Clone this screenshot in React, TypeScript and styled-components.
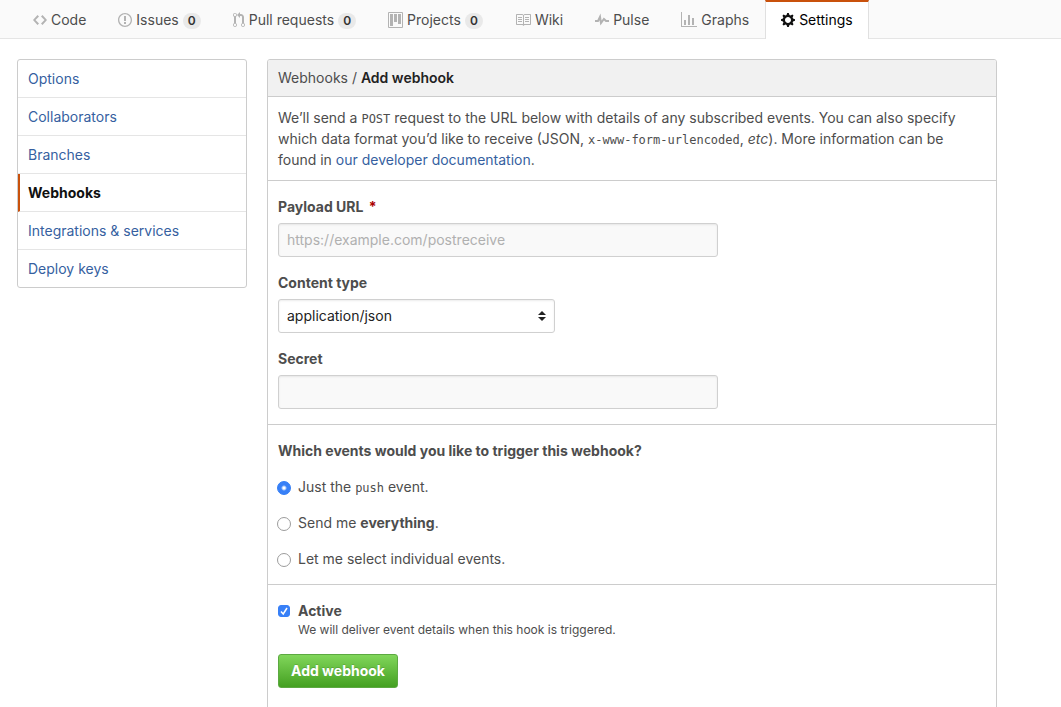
import React from "react";
import styled, { createGlobalStyle, css } from "styled-components";

const GlobalStyle = createGlobalStyle`
  *, *::before, *::after { box-sizing: border-box; }
  body {
    margin: 0;
    background: #fff;
    color: #4d4d4d;
    font: 14px/21px Inter, "Liberation Sans", sans-serif;
  }
  a { color: #365f9f; text-decoration: none; }
  a:hover { text-decoration: underline; }
`;

const TabBar = styled.nav`
  display: flex;
  height: 39px;
  padding-left: 17px;
  background: #fafafa;
  border-bottom: 1px solid #e5e5e5;
`;

const Tab = styled.a<{ $active?: boolean }>`
  display: flex;
  align-items: center;
  gap: 4px;
  height: 39px;
  padding: 0 15px 2px;
  border: solid transparent;
  border-width: 3px 1px 0;
  color: #4d4d4d;
  white-space: nowrap;
  svg { fill: #b3b3b3; flex: none; }
  ${(p) =>
    p.$active &&
    css`
      color: #000;
      background: #fff;
      border-color: #c9510c #e0e0e0 transparent;
      border-top-width: 2px;
      padding-bottom: 1px;
      svg { fill: #111; }
    `}
`;

const TabName = styled.span`
  margin-bottom: 2px;
`;

const Counter = styled.span`
  min-width: 18px;
  margin-top: 2px;
  padding: 0 5px;
  border-radius: 8px;
  background: #e9e9e9;
  color: #333;
  font-size: 12px;
  font-weight: 600;
  line-height: 16px;
  text-align: center;
`;

const Layout = styled.div`
  display: grid;
  grid-template-columns: 230px minmax(0, 1fr);
  align-items: start;
  gap: 20px;
  padding: 20px 64px 0 17px;
`;

const Menu = styled.nav`
  display: flex;
  flex-direction: column;
  border: 1px solid #ccc;
  border-radius: 3px;
`;

const MenuItem = styled.a<{ $active?: boolean }>`
  padding: 8px 10px;
  border-bottom: 1px solid #e5e5e5;
  &:last-child { border-bottom: 0; }
  ${(p) =>
    p.$active &&
    css`
      color: #111;
      font-weight: 700;
      padding-left: 8px;
      border-left: 2px solid #c9510c;
    `}
`;

const Panel = styled.main`
  border: 1px solid #ccc;
  border-radius: 3px;
`;

const PanelHeader = styled.h1`
  margin: 0;
  padding: 7px 10px 8px;
  background: #f1f1f1;
  border-bottom: 1px solid #ccc;
  border-radius: 2px 2px 0 0;
  font-size: 14px;
  font-weight: 400;
  strong { color: #222; font-weight: 600; }
`;

const Intro = styled.p`
  margin: 0;
  padding: 10px 20px 10px 10px;
  border-bottom: 1px solid #ccc;
`;

const Code = styled.code`
  font: 12px "DejaVu Sans Mono", monospace;
`;

const Section = styled.section`
  display: flex;
  flex-direction: column;
  align-items: flex-start;
  gap: 15px;
  padding: 15px 10px;
  border-bottom: 1px solid #ccc;
  &:last-child { border-bottom: 0; padding-bottom: 30px; }
`;

const Field = styled.div`
  display: flex;
  flex-direction: column;
  gap: 6px;
`;

const Label = styled.label`
  font-weight: 700;
`;

const Heading = styled.h2`
  margin: 0;
  font-size: 14px;
  font-weight: 700;
`;

const Required = styled.span`
  margin-left: 2px;
  color: #a00;
`;

const control = css`
  height: 34px;
  padding: 0 8px 2px;
  border: 1px solid #d0d0d0;
  border-radius: 3px;
  box-shadow: inset 0 1px 2px rgba(0, 0, 0, 0.075);
  font: inherit;
`;

const TextInput = styled.input`
  ${control}
  width: 440px;
  max-width: 100%;
  background: #f9f9f9;
  color: #333;
  &::placeholder { color: #b0b0b0; }
`;

const SelectBox = styled.div`
  display: grid;
  align-items: center;
  width: 277px;
  > * { grid-area: 1 / 1; }
  svg { justify-self: end; margin-right: 9px; pointer-events: none; fill: #222; }
`;

const Select = styled.select`
  ${control}
  width: 100%;
  appearance: none;
  background: #fff;
  color: #222;
`;

const Choice = styled.label`
  display: flex;
  align-items: center;
  gap: 7px;
  margin-left: -1px;
  strong { font-weight: 700; }
`;

const Radio = styled.input`
  appearance: none;
  width: 14px;
  height: 14px;
  margin: 2px 0 0;
  border: 1px solid #9c9c9c;
  border-radius: 50%;
  background: #fff;
  &:checked {
    border-color: #2f7cf6;
    background: radial-gradient(circle, #fff 0 1px, #3880f7 3px);
  }
`;

const CheckRow = styled.div`
  display: grid;
  grid-template-columns: 12px auto;
  column-gap: 8px;
  align-items: center;
`;

const CheckBox = styled.span`
  display: grid;
  > * { grid-area: 1 / 1; }
  svg { pointer-events: none; }
`;

const Check = styled.input`
  appearance: none;
  width: 12px;
  height: 12px;
  margin: 0;
  border: 1px solid #9c9c9c;
  border-radius: 3px;
  &:checked { background: #3880f7; border-color: #3880f7; }
  & + svg { visibility: hidden; }
  &:checked + svg { visibility: visible; }
`;

const Note = styled.span`
  grid-column: 2;
  font-size: 12px;
  line-height: 18px;
`;

const SubmitButton = styled.button`
  height: 34px;
  padding: 0 12px;
  border: 1px solid #5ca941;
  border-radius: 3px;
  background: linear-gradient(#81d65b, #44a021);
  color: #fff;
  font: 700 14px/20px Inter, "Liberation Sans", sans-serif;
  text-shadow: 0 -1px 0 rgba(0, 0, 0, 0.15);
  cursor: pointer;
`;

type TabData = { name: string; width: number; path: string; count?: number; active?: boolean };

const tabs: TabData[] = [
  { name: "Code", width: 14, path: "M9.5 3L8 4.5 11.5 8 8 11.5 9.5 13 14 8 9.5 3zm-5 0L0 8l4.5 5L6 11.5 2.5 8 6 4.5 4.5 3z" },
  { name: "Issues", width: 14, count: 0, path: "M7 2.3c3.14 0 5.7 2.56 5.7 5.7s-2.56 5.7-5.7 5.7A5.71 5.71 0 0 1 1.3 8c0-3.14 2.56-5.7 5.7-5.7zM7 1C3.14 1 0 4.14 0 8s3.14 7 7 7 7-3.14 7-7-3.14-7-7-7zm1 3H6v5h2V4zm0 6H6v2h2v-2z" },
  { name: "Pull requests", width: 12, count: 0, path: "M11 11.28V5c-.03-.78-.34-1.47-.94-2.06C9.46 2.35 8.78 2.03 8 2H7V0L4 3l3 3V4h1c.27.02.48.11.69.31.21.2.3.42.31.69v6.28A1.993 1.993 0 0 0 10 15a1.993 1.993 0 0 0 1-3.72zm-1 2.92c-.66 0-1.2-.55-1.2-1.2 0-.65.55-1.2 1.2-1.2.65 0 1.2.55 1.2 1.2 0 .65-.55 1.2-1.2 1.2zM4 3c0-1.11-.89-2-2-2a1.993 1.993 0 0 0-1 3.72v6.56A1.993 1.993 0 0 0 2 15a1.993 1.993 0 0 0 1-3.72V4.72c.59-.34 1-.98 1-1.72zm-.8 10c0 .66-.55 1.2-1.2 1.2-.65 0-1.2-.55-1.2-1.2 0-.65.55-1.2 1.2-1.2.65 0 1.2.55 1.2 1.2zM2 4.2C1.34 4.2.8 3.65.8 3c0-.65.55-1.2 1.2-1.2.65 0 1.2.55 1.2 1.2 0 .65-.55 1.2-1.2 1.2z" },
  { name: "Projects", width: 15, count: 0, path: "M10 12h3V2h-3v10zm-4-2h3V2H6v8zm-4 4h3V2H2v12zm-1 1h13V1H1v14zM14 0H1a1 1 0 0 0-1 1v14a1 1 0 0 0 1 1h13a1 1 0 0 0 1-1V1a1 1 0 0 0-1-1z" },
  { name: "Wiki", width: 16, path: "M3 5h4v1H3V5zm0 3h4V7H3v1zm0 2h4V9H3v1zm11-5h-4v1h4V5zm0 2h-4v1h4V7zm0 2h-4v1h4V9zm2-6v9c0 .55-.45 1-1 1H9.5l-1 1-1-1H2c-.55 0-1-.45-1-1V3c0-.55.45-1 1-1h5.5l1 1 1-1H15c.55 0 1 .45 1 1zm-8 .5L7.5 3H2v9h6V3.5zm7-.5H9.5l-.5.5V12h6V3z" },
  { name: "Pulse", width: 14, path: "M11.5 8L8.8 5.4 6.6 8.5 5.5 1.6 2.38 8H0v2h3.6l.9-1.8.9 5.4L9 8.5l1.6 1.5H14V8h-2.5z" },
  { name: "Graphs", width: 16, path: "M16 14v1H0V0h1v14h15zM5 13H3V8h2v5zm4 0H7V3h2v10zm4 0h-2V6h2v7z" },
  { name: "Settings", width: 14, active: true, path: "M14 8.77v-1.6l-1.94-.64-.45-1.09.88-1.84-1.13-1.13-1.81.91-1.09-.45-.69-1.92h-1.6l-.63 1.94-1.11.45-1.84-.88-1.13 1.13.91 1.81-.45 1.09L0 7.23v1.59l1.94.64.45 1.09-.88 1.84 1.13 1.13 1.81-.91 1.09.45.69 1.92h1.59l.63-1.94 1.11-.45 1.84.88 1.13-1.13-.92-1.81.47-1.09L14 8.75v.02zM7 11c-1.66 0-3-1.34-3-3s1.34-3 3-3 3 1.34 3 3-1.34 3-3 3z" },
];

const menu = ["Options", "Collaborators", "Branches", "Webhooks", "Integrations & services", "Deploy keys"];

export default function App() {
  return (
    <>
      <GlobalStyle />
      <TabBar aria-label="Repository">
        {tabs.map((t) => (
          <Tab key={t.name} href="#" $active={t.active}>
            <svg width={t.width} height="16" viewBox={`0 0 ${t.width} 16`} aria-hidden="true">
              <path fillRule="evenodd" d={t.path} />
            </svg>
            <TabName>{t.name}</TabName>
            {t.count !== undefined && <Counter>{t.count}</Counter>}
          </Tab>
        ))}
      </TabBar>
      <Layout>
        <Menu aria-label="Settings">
          {menu.map((m) => (
            <MenuItem key={m} href="#" $active={m === "Webhooks"}>{m}</MenuItem>
          ))}
        </Menu>
        <Panel>
          <PanelHeader>Webhooks / <strong>Add webhook</strong></PanelHeader>
          <Intro>
            We’ll send a <Code>POST</Code> request to the URL below with details of any subscribed events. You can also
            specify which data format you’d like to receive (JSON, <Code>x-www-form-urlencoded</Code>, <em>etc</em>).
            More information can be found in <a href="#">our developer documentation</a>.
          </Intro>
          <Section>
            <Field>
              <Label htmlFor="url">Payload URL <Required>*</Required></Label>
              <TextInput id="url" type="url" placeholder="https://example.com/postreceive" />
            </Field>
            <Field>
              <Label htmlFor="type">Content type</Label>
              <SelectBox>
                <Select id="type" defaultValue="application/json">
                  <option>application/json</option>
                  <option>application/x-www-form-urlencoded</option>
                </Select>
                <svg width="8" height="10" viewBox="0 0 8 10" aria-hidden="true">
                  <path d="M4 0l4 4H0zM4 10l4-4H0z" />
                </svg>
              </SelectBox>
            </Field>
            <Field>
              <Label htmlFor="secret">Secret</Label>
              <TextInput id="secret" type="text" />
            </Field>
          </Section>
          <Section>
            <Heading>Which events would you like to trigger this webhook?</Heading>
            <Choice><Radio type="radio" name="events" defaultChecked /><span>Just the <Code>push</Code> event.</span></Choice>
            <Choice><Radio type="radio" name="events" /><span>Send me <strong>everything</strong>.</span></Choice>
            <Choice><Radio type="radio" name="events" /><span>Let me select individual events.</span></Choice>
          </Section>
          <Section>
            <CheckRow>
              <CheckBox>
                <Check id="active" type="checkbox" defaultChecked />
                <svg width="12" height="12" viewBox="0 0 12 12" aria-hidden="true">
                  <path d="M3 6.5L5.2 9 9 3" fill="none" stroke="#fff" strokeWidth="1.5" />
                </svg>
              </CheckBox>
              <Label htmlFor="active">Active</Label>
              <Note>We will deliver event details when this hook is triggered.</Note>
            </CheckRow>
            <SubmitButton type="button">Add webhook</SubmitButton>
          </Section>
        </Panel>
      </Layout>
    </>
  );
}
